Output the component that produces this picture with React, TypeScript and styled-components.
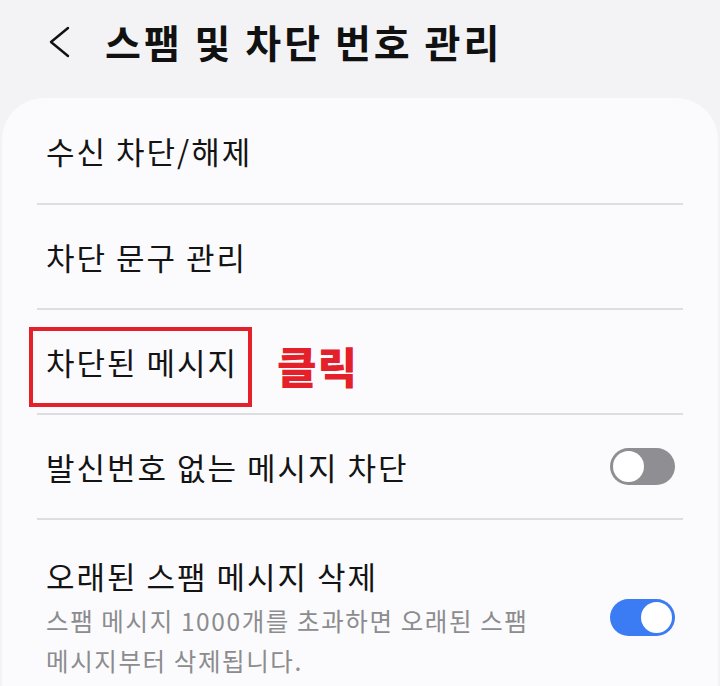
import React from 'react';
import styled, { createGlobalStyle } from 'styled-components';

const GlobalStyle = createGlobalStyle`
  html, body {
    margin: 0;
    padding: 0;
    background: #f3f3f5;
    font-family: "Noto Sans CJK KR", "Noto Sans", sans-serif;
  }
`;

const Page = styled.div`
  width: 720px;
  height: 686px;
  overflow: hidden;
  background: #f3f3f5;
`;

const Header = styled.header`
  display: flex;
  align-items: center;
  height: 98px;
  padding: 0 0 0 46px;
  box-sizing: border-box;
`;

const BackButton = styled.button`
  width: 26px;
  height: 40px;
  padding: 0;
  margin: -14px 33px 0 0;
  border: none;
  background: none;
  display: flex;
  align-items: center;
  justify-content: center;
`;

const Title = styled.h1`
  margin: -16px 0 0;
  font-size: 39px;
  font-weight: 700;
  color: #111;
  letter-spacing: 3px;
`;

const Card = styled.section`
  margin: 0 2px;
  background: #fbfbfd;
  border-radius: 42px 42px 0 0;
  padding: 0 35px 0 35px;
  height: 600px;
`;

const Row = styled.div<{ tall?: boolean }>`
  position: relative;
  display: flex;
  align-items: center;
  justify-content: space-between;
  min-height: ${({ tall }) => (tall ? '170px' : '105px')};
  padding: ${({ tall }) => (tall ? '24px 0 0 9px' : '0 0 0 9px')};
  box-sizing: border-box;
  border-bottom: ${({ tall }) => (tall ? 'none' : '2px solid #dedee0')};
  &:first-child {
    min-height: 107px;
  }
`;

const TextBlock = styled.div`
  display: flex;
  flex-direction: column;
`;

const Label = styled.span`
  font-size: 31px;
  color: #141414;
  line-height: 44px;
  letter-spacing: 2px;
`;

const Sub = styled.span`
  font-size: 24.5px;
  color: #8c8c8e;
  line-height: 40px;
  margin-top: 3px;
  width: 520px;
  letter-spacing: 1.6px;
  word-break: keep-all;
`;

const Highlight = styled.div`
  position: absolute;
  left: -8px;
  top: 17px;
  width: 215px;
  height: 72px;
  border: 4px solid #e4202a;
`;

const Note = styled.span`
  position: absolute;
  left: 240px;
  top: 24px;
  font-size: 43px;
  font-weight: 900;
  color: #e4202a;
  letter-spacing: 1px;
`;

const Toggle = styled.div<{ on?: boolean }>`
  flex: none;
  width: 65px;
  height: 37px;
  margin-right: 8px;
  border-radius: 19px;
  background: ${({ on }) => (on ? '#3b7bf3' : '#8f8f93')};
  position: relative;
  &::after {
    content: '';
    position: absolute;
    top: 3px;
    left: ${({ on }) => (on ? '31px' : '3px')};
    width: 31px;
    height: 31px;
    border-radius: 50%;
    background: #fff;
  }
`;

const rows = [
  { label: '수신 차단/해제' },
  { label: '차단 문구 관리' },
  { label: '차단된 메시지', marked: true },
  { label: '발신번호 없는 메시지 차단', toggle: false },
];

export default function App() {
  return (
    <Page>
      <GlobalStyle />
      <Header>
        <BackButton aria-label="뒤로">
          <svg width="24" height="34" viewBox="0 0 24 34">
            <path d="M21 3 L4 17 L21 31" fill="none" stroke="#111" strokeWidth="2.4" strokeLinecap="round" strokeLinejoin="round" />
          </svg>
        </BackButton>
        <Title>스팸 및 차단 번호 관리</Title>
      </Header>
      <Card>
        {rows.map((r) => (
          <Row key={r.label}>
            <Label>{r.label}</Label>
            {r.marked && (
              <>
                <Highlight />
                <Note>클릭</Note>
              </>
            )}
            {r.toggle !== undefined && <Toggle on={r.toggle} />}
          </Row>
        ))}
        <Row tall>
          <TextBlock>
            <Label>오래된 스팸 메시지 삭제</Label>
            <Sub>스팸 메시지 1000개를 초과하면 오래된 스팸 메시지부터 삭제됩니다.</Sub>
          </TextBlock>
          <Toggle on />
        </Row>
      </Card>
    </Page>
  );
}
